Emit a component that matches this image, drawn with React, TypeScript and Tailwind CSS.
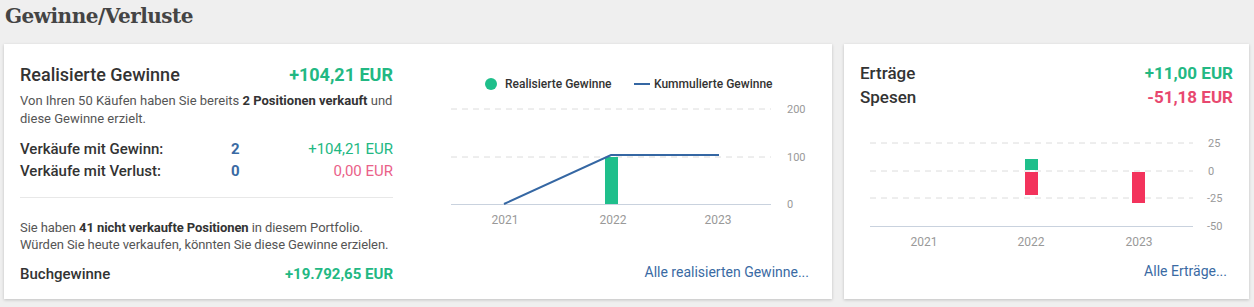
import React from 'react';

const green = '#1fbf8b';
const red = '#f3335c';
const blue = '#3567a3';

function GainsChart() {
  return (
    <svg width={408} height={160} className="block" style={{ fontFamily: 'Roboto, sans-serif' }}>
      <circle cx={67} cy={12} r={6} fill={green} />
      <text x={81} y={16} fontSize={12} fontWeight={500} fill="#333">Realisierte Gewinne</text>
      <line x1={210} x2={226} y1={12} y2={12} stroke={blue} strokeWidth={2} />
      <text x={230} y={16} fontSize={12} fontWeight={500} fill="#333">Kummulierte Gewinne</text>

      <line x1={27} x2={347} y1={37} y2={37} stroke="#dcdcdc" strokeDasharray="6 5" />
      <line x1={27} x2={347} y1={85} y2={85} stroke="#dcdcdc" strokeDasharray="6 5" />
      <line x1={27} x2={347} y1={132.5} y2={132.5} stroke="#c9d2de" />
      <text x={363} y={41} fontSize={11} fill="#999">200</text>
      <text x={363} y={89} fontSize={11} fill="#999">100</text>
      <text x={363} y={136} fontSize={11} fill="#999">0</text>

      <rect x={181} y={85} width={13} height={47} fill={green} />
      <polyline points="80,132 187,83 295,83" fill="none" stroke={blue} strokeWidth={2} />

      <text x={81} y={152} fontSize={12} fill="#999" textAnchor="middle">2021</text>
      <text x={189} y={152} fontSize={12} fill="#999" textAnchor="middle">2022</text>
      <text x={294} y={152} fontSize={12} fill="#999" textAnchor="middle">2023</text>
    </svg>
  );
}

function IncomeChart() {
  return (
    <svg width={405} height={122} className="block" style={{ fontFamily: 'Roboto, sans-serif' }}>
      <line x1={26} x2={349} y1={13} y2={13} stroke="#dcdcdc" strokeDasharray="6 5" />
      <line x1={26} x2={349} y1={41} y2={41} stroke="#dcdcdc" strokeDasharray="6 5" />
      <line x1={26} x2={349} y1={68} y2={68} stroke="#dcdcdc" strokeDasharray="6 5" />
      <line x1={26} x2={349} y1={96.5} y2={96.5} stroke="#c9d2de" />
      <text x={364} y={17} fontSize={11} fill="#999">25</text>
      <text x={364} y={45} fontSize={11} fill="#999">0</text>
      <text x={363} y={72} fontSize={11} fill="#999">-25</text>
      <text x={363} y={100} fontSize={11} fill="#999">-50</text>

      <rect x={181} y={29} width={13} height={11} fill={green} />
      <rect x={181} y={42} width={13} height={23} fill={red} />
      <rect x={288} y={42} width={13} height={31} fill={red} />

      <text x={80} y={116} fontSize={12} fill="#999" textAnchor="middle">2021</text>
      <text x={187} y={116} fontSize={12} fill="#999" textAnchor="middle">2022</text>
      <text x={295} y={116} fontSize={12} fill="#999" textAnchor="middle">2023</text>
    </svg>
  );
}

export default function App() {
  return (
    <div className="h-[307px] w-[1254px] overflow-hidden bg-[#efefef] font-['Roboto',sans-serif]">
      <h1 className="px-[5px] pt-[2px] font-['DejaVu_Serif',serif] text-[20px] font-bold leading-[29px] tracking-[-0.5px] text-[#444]">
        Gewinne/Verluste
      </h1>

      <div className="mt-[13px] flex gap-3 pl-1">
        {/* Realisierte Gewinne */}
        <section className="flex h-[255px] w-[828px] bg-white shadow-[0_1px_3px_rgba(0,0,0,0.2)]">
          <div className="ml-4 mt-[17px] w-[373px]">
            <div className="flex items-baseline justify-between">
              <h2 className="text-[18px] font-medium text-[#333]">Realisierte Gewinne</h2>
              <span className="text-[18px] font-bold text-[#22b883]">+104,21 EUR</span>
            </div>
            <p className="mt-[4px] text-[13px] leading-[18px] text-[#555]">
              Von Ihren 50 Käufen haben Sie bereits <b className="font-bold text-[#333]">2 Positionen verkauft</b> und diese Gewinne erzielt.
            </p>
            <div className="mt-[10px] text-[15px] leading-[22px]">
              <div className="flex">
                <span className="w-[211px] font-medium text-[#333]">Verkäufe mit Gewinn:</span>
                <span className="font-bold text-[#3a6aa3]">2</span>
                <span className="ml-auto text-[#22b883]">+104,21 EUR</span>
              </div>
              <div className="flex">
                <span className="w-[211px] font-medium text-[#333]">Verkäufe mit Verlust:</span>
                <span className="font-bold text-[#3a6aa3]">0</span>
                <span className="ml-auto text-[#ea6189]">0,00 EUR</span>
              </div>
            </div>
            <div className="mt-[15px] h-px bg-[#e8e8e8]" />
            <p className="mt-[21px] whitespace-nowrap text-[13px] leading-[17px] tracking-[-0.08px] text-[#555]">
              Sie haben <b className="font-bold text-[#333]">41 nicht verkaufte Positionen</b> in diesem Portfolio.
              <br />
              Würden Sie heute verkaufen, könnten Sie diese Gewinne erzielen.
            </p>
            <div className="mt-[10px] flex items-baseline justify-between text-[15px]">
              <span className="font-medium text-[#333]">Buchgewinne</span>
              <span className="font-bold text-[#22b883]">+19.792,65 EUR</span>
            </div>
          </div>

          <div className="ml-[31px] flex flex-col">
            <div className="mt-[28px]">
              <GainsChart />
            </div>
            <a className="mr-[23px] mt-[30px] self-end text-[14px] text-[#3a6aa3]">Alle realisierten Gewinne...</a>
          </div>
        </section>

        {/* Erträge */}
        <section className="flex h-[255px] w-[405px] flex-col bg-white shadow-[0_1px_3px_rgba(0,0,0,0.2)]">
          <div className="mx-4 mt-[17px] text-[17px] font-medium leading-[24px]">
            <div className="flex justify-between">
              <span className="text-[#333]">Erträge</span>
              <span className="font-bold text-[#22b883]">+11,00 EUR</span>
            </div>
            <div className="flex justify-between">
              <span className="text-[#333]">Spesen</span>
              <span className="font-bold text-[#e8486f]">-51,18 EUR</span>
            </div>
          </div>
          <div className="mt-[21px]">
            <IncomeChart />
          </div>
          <a className="mr-[22px] mt-[9px] self-end text-[14px] text-[#3a6aa3]">Alle Erträge...</a>
        </section>
      </div>
    </div>
  );
}
